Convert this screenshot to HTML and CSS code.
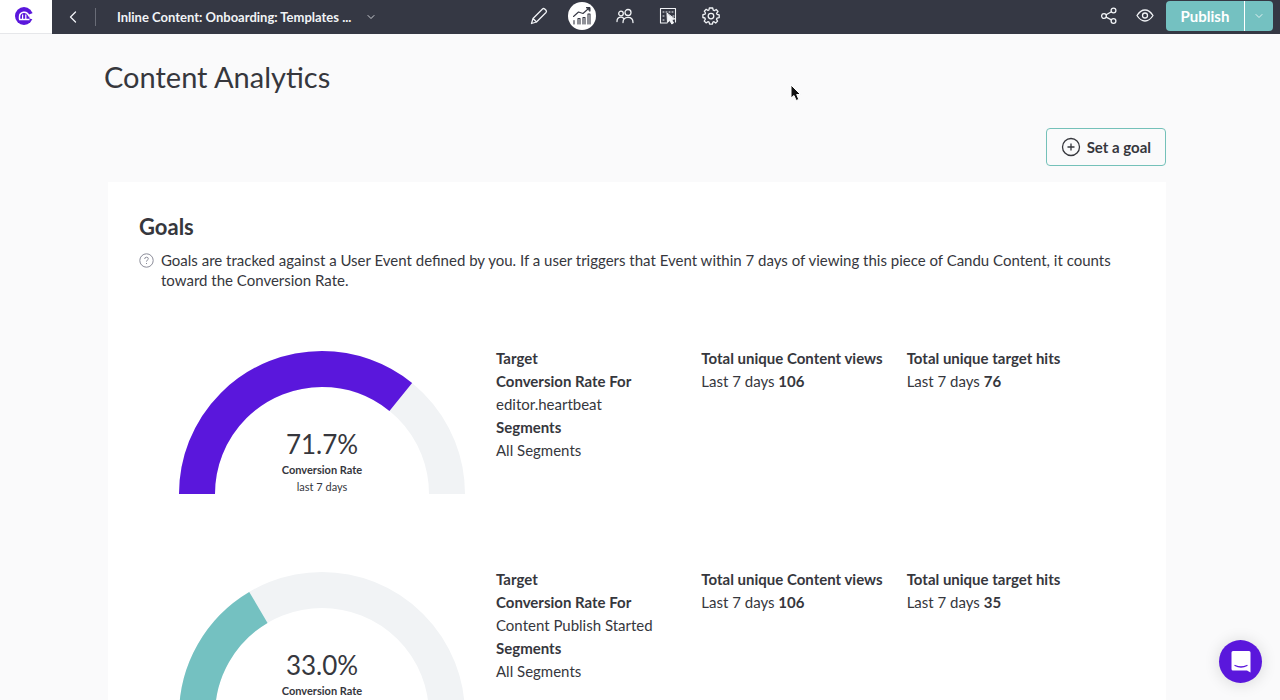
FILE: index.html
```html
<!DOCTYPE html>
<html lang="en">
<head>
<meta charset="utf-8">
<meta name="viewport" content="width=device-width, initial-scale=1">
<title>Content Analytics</title>
<link rel="stylesheet" href="styles.css">
</head>
<body>
<header class="topbar">
  <div class="topbar-start">
    <a class="logo" href="#" aria-label="Home">
      <svg width="18" height="18" viewBox="0 0 18 18"><circle cx="9" cy="9" r="9" fill="#5a17dc"/><path d="M14 7.500L18 6V12.500L14.500 11.500Z" fill="#fff"/><path d="M4.500 12.200V10A4.700 4.700 0 0 1 13.600 8.300L14.500 9.500M4 12.500H14.500" fill="none" stroke="#fff" stroke-width="1.500"/><path d="M7.600 12V7.500M10.800 12V7.500" fill="none" stroke="#fff" stroke-width="1.200"/></svg>
    </a>
    <button class="icon-button back" aria-label="Back"><svg width="8" height="12" viewBox="0 0 8 12"><path d="M6.500 1L1.500 6L6.500 11"/></svg></button>
    <span class="divider"></span>
    <button class="document-menu">Inline Content: Onboarding: Templates ...<svg width="8" height="6" viewBox="0 0 8 6"><path d="M1 1.500L4 4.500L7 1.500"/></svg></button>
  </div>
  <nav class="tools" aria-label="Sections">
    <a class="tool" href="#" aria-label="Edit"><svg width="18" height="18" viewBox="0 0 18 18"><path d="M1.500 16.500L3 11.500L12.500 2Q13.500 1 14.700 2L16 3.300Q17 4.400 16 5.500L6.500 15ZM3 11.500L6.500 15"/></svg></a>
    <a class="tool active" href="#" aria-label="Analytics"><svg width="20" height="20" viewBox="0 0 20 20"><path d="M2 18V14.500M6 18V12.500H8V18M11 18V11.500H13V18M16 18V8H18V18M1.500 10.500L6.500 6L11 7.500L16 3" stroke-width="1.100"/><path d="M14.500 1.500H18V5Z" fill="currentColor" stroke-width="1"/></svg></a>
    <a class="tool" href="#" aria-label="Audience"><svg width="18" height="16" viewBox="0 0 18 16"><circle cx="5" cy="5.500" r="2.300"/><circle cx="12" cy="4.500" r="3"/><path d="M1 13.500Q1 9.200 5 9.200Q6.500 9.200 7.500 10.200M7 14.500Q7 9.300 12 9.300Q17 9.300 17 14.500"/></svg></a>
    <a class="tool" href="#" aria-label="Placement"><svg width="18" height="18" viewBox="0 0 18 18"><path d="M8 16H1.500V1.500H16.500V15" stroke-width="1.100"/><path d="M4 5H15M4 9H7M4 13H7M14 9H15" stroke-dasharray="1 2" stroke-width="1"/><path d="M8 6.500L8.500 15.500L10.800 13.500L12.800 17L14.500 16L12.700 12.500L15.500 12Z" fill="currentColor" stroke-width="1"/></svg></a>
    <a class="tool" href="#" aria-label="Settings"><svg width="18" height="18" viewBox="0 0 18 18"><path d="M7.300 1H10.700L11.200 3.200L12.300 3.700L14.200 2.500L16 4.500L14.500 6.300L15 7.300L17.200 7.800V10.600L15 11.100L14.500 12.300L15.600 14.100L13.700 16L12 14.700L10.900 15.200L10.300 17.200H7.600L7.100 15.200L5.900 14.700L4.100 15.900L2.200 14L3.400 12.200L2.900 11L.9 10.500V7.700L3 7.200L3.500 6L2.300 4.200L4.200 2.300L6 3.500L7 3Z"/><circle cx="9" cy="9.100" r="2.800"/></svg></a>
  </nav>
  <div class="topbar-end">
    <button class="icon-button" aria-label="Share"><svg width="16" height="18" viewBox="0 0 16 18"><circle cx="3" cy="9" r="2.400"/><circle cx="12.500" cy="3.500" r="2.400"/><circle cx="12.500" cy="14" r="2.400"/><path d="M5.200 7.800L10.400 4.700M5.200 10.200L10.400 12.800"/></svg></button>
    <button class="icon-button" aria-label="Preview"><svg width="18" height="14" viewBox="0 0 18 14"><path d="M1 6.500Q4.500 1 9 1T17 6.500Q13.500 12 9 12T1 6.500Z"/><circle cx="9" cy="6.500" r="2.500"/></svg></button>
    <div class="publish-group">
      <button class="publish">Publish</button>
      <button class="publish-more" aria-label="Publish options"><svg width="8" height="6" viewBox="0 0 8 6"><path d="M1 1.500L4 4.500L7 1.500"/></svg></button>
    </div>
  </div>
</header>

<main class="page">
  <h1>Content Analytics</h1>
  <div class="actions">
    <button class="set-goal"><svg width="20" height="20" viewBox="0 0 20 20"><circle cx="10" cy="10" r="8.500"/><path d="M10 6.500V13.500M6.500 10H13.500"/></svg>Set a goal</button>
  </div>
  <section class="card">
    <h2>Goals</h2>
    <div class="hint">
      <svg width="15" height="15" viewBox="0 0 15 15"><circle cx="7.500" cy="7.500" r="6.700"/><path d="M5.700 6Q5.700 4.200 7.500 4.200T9.300 5.800Q9.300 6.600 8.300 7.200Q7.500 7.700 7.500 8.600M7.500 10V11"/></svg>
      <p>Goals are tracked against a User Event defined by you. If a user triggers that Event within 7 days of viewing this piece of Candu Content, it counts toward the Conversion Rate.</p>
    </div>

    <article class="goal">
      <div class="gauge">
        <svg viewBox="0 0 286 143"><path class="track" d="M18 143A125 125 0 0 1 268 143"/><path class="value purple" pathLength="100" stroke-dasharray="71.700 100" d="M18 143A125 125 0 0 1 268 143"/></svg>
        <div class="gauge-label"><span class="rate">71.7%</span><strong>Conversion Rate</strong><span>last 7 days</span></div>
      </div>
      <dl><dt>Target</dt><dt>Conversion Rate For</dt><dd>editor.heartbeat</dd><dt>Segments</dt><dd>All Segments</dd></dl>
      <dl><dt>Total unique Content views</dt><dd>Last 7 days <b>106</b></dd></dl>
      <dl><dt>Total unique target hits</dt><dd>Last 7 days <b>76</b></dd></dl>
    </article>

    <article class="goal">
      <div class="gauge">
        <svg viewBox="0 0 286 143"><path class="track" d="M18 143A125 125 0 0 1 268 143"/><path class="value teal" pathLength="100" stroke-dasharray="33 100" d="M18 143A125 125 0 0 1 268 143"/></svg>
        <div class="gauge-label"><span class="rate">33.0%</span><strong>Conversion Rate</strong><span>last 7 days</span></div>
      </div>
      <dl><dt>Target</dt><dt>Conversion Rate For</dt><dd>Content Publish Started</dd><dt>Segments</dt><dd>All Segments</dd></dl>
      <dl><dt>Total unique Content views</dt><dd>Last 7 days <b>106</b></dd></dl>
      <dl><dt>Total unique target hits</dt><dd>Last 7 days <b>35</b></dd></dl>
    </article>
  </section>
</main>

<button class="chat" aria-label="Open chat"><svg width="22" height="24" viewBox="0 0 22 24"><path d="M3 1H19Q20.500 1 20.500 2.500V22.500L17 20.500H3Q1.500 20.500 1.500 19V2.500Q1.500 1 3 1Z" fill="#fff"/><path d="M5 15.500Q11 18.500 17 15.500" fill="none" stroke="#5a17dc" stroke-width="1.300" stroke-linecap="round"/></svg></button>
<svg class="cursor" width="12" height="18" viewBox="0 0 12 18"><path d="M1 1V14L4 11.500L6.200 16.500L8.800 15.400L6.700 10.500H10.500Z" fill="#111" stroke="#fff"/></svg>
</body>
</html>
```

FILE: styles.css
```css
* { box-sizing: border-box; }
html { scrollbar-width: none; }
body {
  margin: 0;
  background: #fafafb;
  color: #36373d;
  font-family: Lato, "Open Sans", sans-serif;
  font-size: 15px;
}
button { margin: 0; padding: 0; border: 0; background: none; color: inherit; font: inherit; cursor: pointer; }
h1, h2, p, dl, dd { margin: 0; }
svg { display: block; flex: none; }

.topbar { display: flex; height: 34px; background: #353844; color: #f1f3f6; }
.topbar svg { fill: none; stroke: currentColor; stroke-width: 1.3; stroke-linecap: round; stroke-linejoin: round; }
.topbar-start, .topbar-end { display: flex; flex: 1 1 0; align-items: center; padding-bottom: 2px; }
.topbar-start { padding-bottom: 0; }
.topbar .logo { display: flex; align-items: center; justify-content: center; width: 52px; height: 34px; padding: 0 4px 2px 0; background: #fff; border-bottom: 1px solid #e6e7ea; }
.topbar .logo svg { stroke: none; stroke-linecap: butt; }
.back { margin-left: 17px; }
.divider { width: 1px; height: 18px; margin: 0 21px 0 18px; background: #696c77; }
.document-menu { display: flex; align-items: center; gap: 16px; font-size: 13px; font-weight: 700; white-space: nowrap; }
.topbar .document-menu svg, .topbar .publish-more svg { stroke-width: 1; opacity: .8; }
.tools { display: flex; align-items: center; gap: 15px; margin-right: 23px; padding-bottom: 2px; }
.tool { display: flex; align-items: center; justify-content: center; width: 28px; height: 28px; border-radius: 50%; color: inherit; }
.tool.active { background: #fff; color: #353844; }
.topbar-end { justify-content: flex-end; padding-right: 7px; }
.topbar-end .icon-button + .icon-button { margin: 0 12px 0 19px; }
.publish-group { display: flex; height: 30px; border-radius: 4px; overflow: hidden; color: #fff; }
.publish, .publish-more { display: flex; align-items: center; justify-content: center; background: #74c1c1; }
.publish { width: 78px; font-size: 15px; font-weight: 700; }
.publish-more { width: 29px; border-left: 1px solid #fff; }

.page { padding: 24px 114px 80px 104px; }
h1 { font-size: 29px; font-weight: 400; line-height: 38px; }
.actions { display: flex; justify-content: flex-end; margin-top: 32px; }
.set-goal { display: flex; align-items: center; gap: 6px; height: 38px; padding: 0 14px; border: 1px solid #74c1b9; border-radius: 4px; font-weight: 700; }
.set-goal svg, .hint svg { fill: none; stroke: currentColor; stroke-width: 1.3; }
.card { margin: 16px 0 0 4px; padding: 31px 32px 80px 31px; background: #fff; }
h2 { font-size: 22px; font-weight: 700; line-height: 28px; }
.hint { display: flex; gap: 7px; margin-top: 9px; line-height: 20px; }
.hint svg { margin-top: 3px; color: #8b8c99; stroke-width: 1; }
.goal { display: grid; grid-template-columns: 357px repeat(3, 1fr); margin: 61px 22px 0 0; }
.goal + .goal { margin-top: 78px; }
.gauge { position: relative; width: 286px; height: 143px; margin-left: 40px; }
.gauge path { fill: none; stroke-width: 36; }
.gauge .track { stroke: #f1f3f5; }
.gauge .purple { stroke: #5a17dc; }
.gauge .teal { stroke: #74c1c1; }
.gauge-label { position: absolute; inset: auto 0 -1px; display: flex; flex-direction: column; align-items: center; font-size: 11px; line-height: 17px; }
.rate { font-size: 26px; line-height: 34px; }
.goal dl { line-height: 23px; margin-top: -4px; white-space: nowrap; }
dt, b { font-weight: 700; }

.chat { position: fixed; right: 18px; bottom: 17px; display: flex; align-items: center; justify-content: center; width: 43px; height: 43px; border-radius: 50%; background: #5a17dc; box-shadow: 0 1px 16px rgba(0, 0, 0, .14); }
.cursor { position: absolute; left: 790px; top: 84px; pointer-events: none; }
```
